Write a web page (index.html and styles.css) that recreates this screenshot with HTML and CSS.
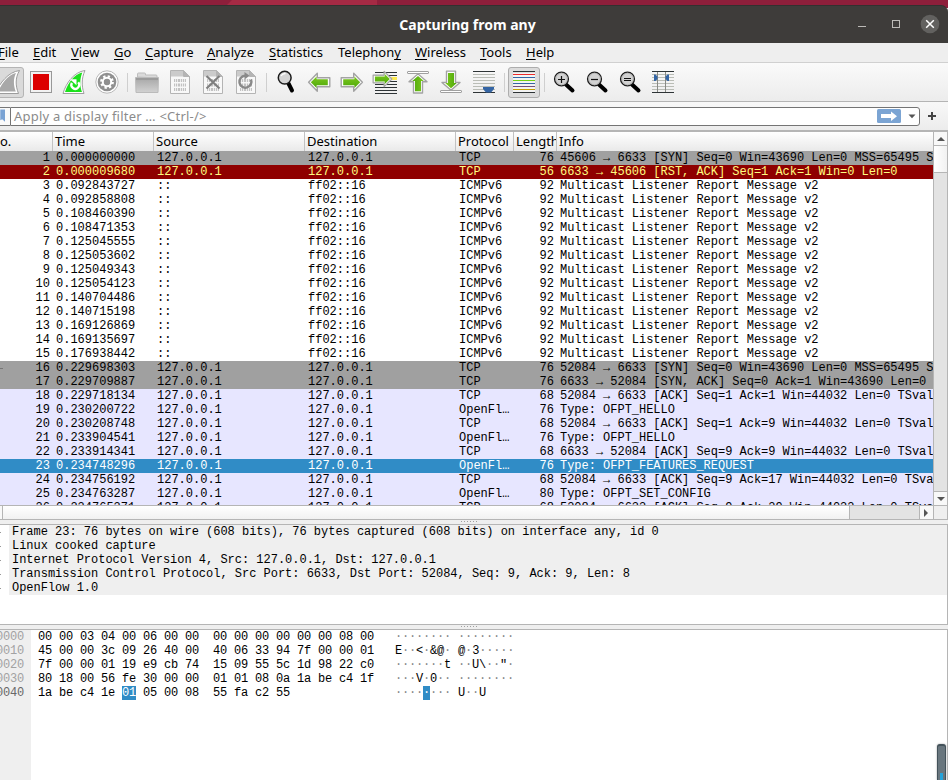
FILE: index.html
```html
<!DOCTYPE html>
<html lang="en">
<head>
<meta charset="utf-8">
<title>Capturing from any</title>
<link rel="stylesheet" href="styles.css">
</head>
<body>
<svg class="defs" width="0" height="0" aria-hidden="true">
  <defs>
    <linearGradient id="green" x1="0" y1="0" x2="0" y2="1"><stop offset="0" stop-color="#7cc81e"/><stop offset="1" stop-color="#4ea80a"/></linearGradient>
    <linearGradient id="grey" x1="0" y1="0" x2="0" y2="1"><stop offset="0" stop-color="#a6a6a6"/><stop offset="1" stop-color="#d2d2d2"/></linearGradient>
    <g id="arrow">
      <path d="M0.8 10L9.5 1v4.500H22v9H9.500V19z" fill="#fff" stroke="#a3a3a3" stroke-width="1.400" stroke-linejoin="round"/>
      <path d="M3 10L8.800 4.200V7H20v6H8.800v2.800z" fill="url(#green)"/>
    </g>
    <g id="file">
      <path d="M.5 .5h13l6 6v17H.5z" fill="#f8f8f8" stroke="#b4b4b4"/>
      <path d="M1 1h12.300v5.500H1z" fill="#cbcbcb"/>
      <path d="M13.500 .5v6h6z" fill="#b4b4b4" stroke="#b4b4b4"/>
      <path d="M4 10.500h12M4 15h12M4 19.500h12" stroke="#c2c2c2" stroke-width="3" stroke-dasharray="1.200 .8 1.200 .8 2 .8"/>
    </g>
    <g id="lens">
      <path d="M12.500 13l6.500 6" stroke="#000" stroke-width="4" stroke-linecap="round"/>
      <circle cx="8" cy="7.500" r="6.900" fill="#d2d2d2" stroke="#1c1c1c" stroke-width="1.400"/>
      <circle cx="8" cy="7.500" r="5.800" fill="none" stroke="#aaa" stroke-width=".7"/>
    </g>
  </defs>
</svg>
<div class="window">
  <div class="desktop"><i></i></div>
  <header class="titlebar">
    <h1>Capturing from any</h1>
    <svg class="controls" width="90" height="38" viewBox="858 5 90 38">
      <path d="M858 26.500h8" stroke="#bcbab7"/>
      <rect x="892.500" y="20.500" width="7" height="7" fill="none" stroke="#bcbab7"/>
      <circle cx="930" cy="24" r="9.300" fill="#62615f"/>
      <path d="M926.200 20.200l7.600 7.600m0-7.600l-7.600 7.600" stroke="#fff" stroke-width="1.500"/>
    </svg>
  </header>
  <nav class="menubar">
    <span class="m-file"><u>F</u>ile</span><span class="m-edit"><u>E</u>dit</span><span class="m-view"><u>V</u>iew</span><span class="m-go"><u>G</u>o</span><span class="m-capture"><u>C</u>apture</span><span class="m-analyze"><u>A</u>nalyze</span><span class="m-stat"><u>S</u>tatistics</span><span class="m-tel">Telephon<u>y</u></span><span class="m-wire"><u>W</u>ireless</span><span class="m-tools"><u>T</u>ools</span><span class="m-help"><u>H</u>elp</span>
  </nav>
  <div class="toolbar">
    <svg viewBox="-9 66 33 32">
      <rect x="-12" y="67.500" width="35.500" height="30" rx="2.500" fill="#dadada" stroke="#b4b4b4"/>
      <path d="M-5 93.500C0 83 8 72 19.500 70.500C15 78 15.500 86 18.500 93.500z" fill="#fff" stroke="#9c9c9c"/>
      <path d="M-2 91.500C3 82 8 75 16 73C13 79 13.500 86 15.800 91.500z" fill="#a8a8a8"/>
    </svg>
    <svg viewBox="24 66 33 32">
      <rect x="30.500" y="71.500" width="21" height="21" fill="#f2f2f2" stroke="#989898"/>
      <rect x="33" y="74" width="16" height="16" fill="#dc0000"/>
    </svg>
    <svg viewBox="57 66 33 32">
      <path d="M63 93.500C66 83 74 72 85 70.500C81.500 78 81.500 86 84 93.500z" fill="#fff" stroke="#a0a0a0"/>
      <path d="M65 92C68.500 82 74 74.500 82.300 72.500C79.700 79 79.700 86 82 92z" fill="#1be01b"/>
      <path d="M78.200 82.300a3.900 3.900 0 1 1-6.300.6" fill="none" stroke="#fff" stroke-width="2.300"/>
      <path d="M70 79.300h6.500v6z" fill="#fff"/>
    </svg>
    <svg viewBox="90 66 33 32">
      <circle cx="107" cy="82" r="11.200" fill="#fff" stroke="#b8b8b8"/>
      <circle cx="107" cy="82" r="9.300" fill="#909090"/>
      <circle cx="107" cy="82" r="5.600" fill="none" stroke="#fff" stroke-width="2.600" stroke-dasharray="2.200 2.200"/>
      <circle cx="107" cy="82" r="4.200" fill="none" stroke="#fff" stroke-width="2"/>
      <circle cx="107" cy="82" r="2.800" fill="#909090"/>
    </svg>
    <i class="sep"></i>
    <svg viewBox="130 66 33 32">
      <path d="M137.500 77v-3q0-1 1-1h6q1 0 1 1v1h10.500q1 0 1 1v2z" fill="#dadada" stroke="#bdbdbd"/>
      <path d="M135.500 77.500h23l-.5 15h-22z" fill="url(#grey)" stroke="#bbb"/>
      <path d="M136 79h22" stroke="#9b9b9b" stroke-width="2"/>
    </svg>
    <svg viewBox="163 66 33 32"><use href="#file" x="170" y="70"/></svg>
    <svg viewBox="196 66 33 32"><use href="#file" x="203" y="70"/><path d="M206.500 76l13 12.500m0-12.500l-13 12.500" stroke="#7f7f7f" stroke-width="2.200"/></svg>
    <svg viewBox="229 66 33 32"><use href="#file" x="236" y="70"/><path d="M251 79.500a6 6 0 1 1-6-3.800" fill="none" stroke="#898989" stroke-width="2.400"/><path d="M244.500 72v7.500l5-3.700z" fill="#898989"/></svg>
    <i class="sep"></i>
    <svg viewBox="269 66 33 32">
      <path d="M288.500 83.500l3.500 7" stroke="#000" stroke-width="4" stroke-linecap="round"/>
      <circle cx="284.700" cy="77.700" r="6.400" fill="#d4d4d4" stroke="#1c1c1c" stroke-width="1.500"/>
      <path d="M281 76q1.500-2.500 4.500-2.500" fill="none" stroke="#fff" stroke-width="1.300"/>
    </svg>
    <svg viewBox="302 66 33 32"><use href="#arrow" x="307.800" y="72.300"/></svg>
    <svg viewBox="335 66 33 32"><use href="#arrow" transform="translate(363.200 72.300) scale(-1 1)"/></svg>
    <svg viewBox="368 66 33 32">
      <path d="M375 72.500h22M375 75.500h22M375 81.500h22M375 84.500h22M375 87.500h22M375 90.500h22M375 93.500h22" stroke="#2e3436"/>
      <path d="M390 78.500h7" stroke="#fce94f" stroke-width="3"/>
      <use href="#arrow" transform="translate(392.500 70.500) scale(-.88 .85)"/>
    </svg>
    <svg viewBox="401 66 33 32">
      <rect x="407.500" y="71.500" width="21" height="2" rx=".5" fill="#fff" stroke="#a0a0a0"/>
      <use href="#arrow" transform="translate(428 73.200) rotate(90) scale(.9 1)"/>
    </svg>
    <svg viewBox="434 66 33 32">
      <rect x="440.500" y="90.500" width="21" height="2" rx=".5" fill="#fff" stroke="#a0a0a0"/>
      <use href="#arrow" transform="translate(441 91) rotate(-90) scale(.9 1)"/>
    </svg>
    <svg viewBox="467 66 33 32">
      <path d="M473 74.500h22M473 77.500h22M473 80.500h22M473 83.500h22M473 86.500h22M473 89.500h22" stroke="#babdb6"/>
      <path d="M473 71.500h22M473 92.500h22" stroke="#2e3436"/>
      <path d="M483 87h11v2l-3 3.500h-5l-3-3.500z" fill="#3465a4"/>
    </svg>
    <i class="sep"></i>
    <svg viewBox="507 66 33 32">
      <rect x="508.500" y="67.500" width="31" height="30" rx="2.500" fill="#dcdcdc" stroke="#adadad"/>
      <path d="M513 73h22v19h-22z" fill="#f3f3f3"/>
      <path d="M513 71.500h22M513 92.500h22" stroke="#2e3436"/>
      <path d="M513 74.500h22" stroke="#ef2929"/><path d="M513 77.500h22M513 83.500h22" stroke="#3465a4"/><path d="M513 80.500h22" stroke="#73d216"/><path d="M513 86.500h22" stroke="#75507b"/><path d="M513 89.500h22" stroke="#c4a000"/>
    </svg>
    <i class="sep"></i>
    <svg viewBox="547 66 33 32"><use href="#lens" x="553.500" y="71.500"/><path d="M558 79.500h7M561.500 76v7" stroke="#111" stroke-width="1.200"/></svg>
    <svg viewBox="580 66 33 32"><use href="#lens" x="586.500" y="71.500"/><path d="M591 79.500h7" stroke="#111" stroke-width="1.200"/></svg>
    <svg viewBox="613 66 33 32"><use href="#lens" x="619.500" y="71.500"/><path d="M624 78.500h7M624 80.500h7" stroke="#111"/></svg>
    <svg viewBox="646 66 33 32">
      <path d="M652 74.500h22M652 77.500h22M652 80.500h22M652 83.500h22M652 86.500h22M652 89.500h22" stroke="#babdb6"/>
      <path d="M652 71.500h22M652 92.500h22" stroke="#2e3436"/>
      <path d="M657.500 72v20M665.500 72v20" stroke="#888a85"/>
      <path d="M654 74.500h1.500l2 2v2.500l-2 2H654zM669 74.500h-1.500l-2 2v2.500l2 2h1.500z" fill="#3465a4"/>
    </svg>
  </div>
  <div class="filterbar">
    <svg class="bookmark" width="10" height="18" viewBox="0 0 10 18"><path d="M0 1.500h5v13L2 12l-2 1z" fill="#7aa3d4"/></svg>
    <div class="filter">
      <span>Apply a display filter … &lt;Ctrl-/&gt;</span>
      <svg width="46" height="17" viewBox="873 108 46 17">
        <rect x="877" y="109" width="24" height="14" rx="1.500" fill="#7ba4d3"/>
        <path d="M881 114h10v-2.500l6 4.700-6 4.700v-2.900h-10z" fill="#fff"/>
        <path d="M908.500 114.500h7l-3.500 3.800z" fill="#555"/>
      </svg>
    </div>
    <svg class="plus" width="8" height="8" viewBox="0 0 8 8"><path d="M0 4h8M4 0v8" stroke="#444" stroke-width="2"/></svg>
  </div>
  <section class="packets">
    <div class="list">
      <div class="row head"><span>o.</span><span>Time</span><span>Source</span><span>Destination</span><span>Protocol</span><span>Length</span><span>Info</span></div>
      <div class="row syn"><b>1</b><b>0.000000000</b><b>127.0.0.1</b><b>127.0.0.1</b><b>TCP</b><b>76</b><b>45606 → 6633 [SYN] Seq=0 Win=43690 Len=0 MSS=65495 S</b></div>
      <div class="row rst"><b>2</b><b>0.000009680</b><b>127.0.0.1</b><b>127.0.0.1</b><b>TCP</b><b>56</b><b>6633 → 45606 [RST, ACK] Seq=1 Ack=1 Win=0 Len=0</b></div>
      <div class="row"><b>3</b><b>0.092843727</b><b>::</b><b>ff02::16</b><b>ICMPv6</b><b>92</b><b>Multicast Listener Report Message v2</b></div>
      <div class="row"><b>4</b><b>0.092858808</b><b>::</b><b>ff02::16</b><b>ICMPv6</b><b>92</b><b>Multicast Listener Report Message v2</b></div>
      <div class="row"><b>5</b><b>0.108460390</b><b>::</b><b>ff02::16</b><b>ICMPv6</b><b>92</b><b>Multicast Listener Report Message v2</b></div>
      <div class="row"><b>6</b><b>0.108471353</b><b>::</b><b>ff02::16</b><b>ICMPv6</b><b>92</b><b>Multicast Listener Report Message v2</b></div>
      <div class="row"><b>7</b><b>0.125045555</b><b>::</b><b>ff02::16</b><b>ICMPv6</b><b>92</b><b>Multicast Listener Report Message v2</b></div>
      <div class="row"><b>8</b><b>0.125053602</b><b>::</b><b>ff02::16</b><b>ICMPv6</b><b>92</b><b>Multicast Listener Report Message v2</b></div>
      <div class="row"><b>9</b><b>0.125049343</b><b>::</b><b>ff02::16</b><b>ICMPv6</b><b>92</b><b>Multicast Listener Report Message v2</b></div>
      <div class="row"><b>10</b><b>0.125054123</b><b>::</b><b>ff02::16</b><b>ICMPv6</b><b>92</b><b>Multicast Listener Report Message v2</b></div>
      <div class="row"><b>11</b><b>0.140704486</b><b>::</b><b>ff02::16</b><b>ICMPv6</b><b>92</b><b>Multicast Listener Report Message v2</b></div>
      <div class="row"><b>12</b><b>0.140715198</b><b>::</b><b>ff02::16</b><b>ICMPv6</b><b>92</b><b>Multicast Listener Report Message v2</b></div>
      <div class="row"><b>13</b><b>0.169126869</b><b>::</b><b>ff02::16</b><b>ICMPv6</b><b>92</b><b>Multicast Listener Report Message v2</b></div>
      <div class="row"><b>14</b><b>0.169135697</b><b>::</b><b>ff02::16</b><b>ICMPv6</b><b>92</b><b>Multicast Listener Report Message v2</b></div>
      <div class="row"><b>15</b><b>0.176938442</b><b>::</b><b>ff02::16</b><b>ICMPv6</b><b>92</b><b>Multicast Listener Report Message v2</b></div>
      <div class="row syn first"><b>16</b><b>0.229698303</b><b>127.0.0.1</b><b>127.0.0.1</b><b>TCP</b><b>76</b><b>52084 → 6633 [SYN] Seq=0 Win=43690 Len=0 MSS=65495 S</b></div>
      <div class="row syn"><b>17</b><b>0.229709887</b><b>127.0.0.1</b><b>127.0.0.1</b><b>TCP</b><b>76</b><b>6633 → 52084 [SYN, ACK] Seq=0 Ack=1 Win=43690 Len=0 </b></div>
      <div class="row tcp"><b>18</b><b>0.229718134</b><b>127.0.0.1</b><b>127.0.0.1</b><b>TCP</b><b>68</b><b>52084 → 6633 [ACK] Seq=1 Ack=1 Win=44032 Len=0 TSval</b></div>
      <div class="row tcp"><b>19</b><b>0.230200722</b><b>127.0.0.1</b><b>127.0.0.1</b><b>OpenFl…</b><b>76</b><b>Type: OFPT_HELLO</b></div>
      <div class="row tcp"><b>20</b><b>0.230208748</b><b>127.0.0.1</b><b>127.0.0.1</b><b>TCP</b><b>68</b><b>52084 → 6633 [ACK] Seq=1 Ack=9 Win=44032 Len=0 TSval</b></div>
      <div class="row tcp"><b>21</b><b>0.233904541</b><b>127.0.0.1</b><b>127.0.0.1</b><b>OpenFl…</b><b>76</b><b>Type: OFPT_HELLO</b></div>
      <div class="row tcp"><b>22</b><b>0.233914341</b><b>127.0.0.1</b><b>127.0.0.1</b><b>TCP</b><b>68</b><b>6633 → 52084 [ACK] Seq=9 Ack=9 Win=44032 Len=0 TSval</b></div>
      <div class="row sel"><b>23</b><b>0.234748296</b><b>127.0.0.1</b><b>127.0.0.1</b><b>OpenFl…</b><b>76</b><b>Type: OFPT_FEATURES_REQUEST</b></div>
      <div class="row tcp"><b>24</b><b>0.234756192</b><b>127.0.0.1</b><b>127.0.0.1</b><b>TCP</b><b>68</b><b>52084 → 6633 [ACK] Seq=9 Ack=17 Win=44032 Len=0 TSva</b></div>
      <div class="row tcp"><b>25</b><b>0.234763287</b><b>127.0.0.1</b><b>127.0.0.1</b><b>OpenFl…</b><b>80</b><b>Type: OFPT_SET_CONFIG</b></div>
      <div class="row tcp"><b>26</b><b>0.234765371</b><b>127.0.0.1</b><b>127.0.0.1</b><b>TCP</b><b>68</b><b>52084 → 6633 [ACK] Seq=9 Ack=29 Win=44032 Len=0 TSva</b></div>
    </div>
    <div class="vscroll">
      <div class="btn"><svg width="8" height="4"><path d="M0 4l4-4 4 4z"/></svg></div>
      <div class="vthumb"></div>
      <div class="groove"></div>
      <div class="btn down"><svg width="8" height="4"><path d="M0 0h8l-4 4z"/></svg></div>
    </div>
    <div class="hscroll">
      <div class="hstart"></div>
      <div class="hthumb"></div>
      <div class="hgroove"></div>
      <div class="hbtn"><svg width="4" height="8"><path d="M0 0v8l4-4z"/></svg></div>
      <div class="corner"></div>
    </div>
  </section>
  <div class="splitter"><i></i></div>
  <section class="details">
    <div>Frame 23: 76 bytes on wire (608 bits), 76 bytes captured (608 bits) on interface any, id 0</div>
    <div>Linux cooked capture</div>
    <div>Internet Protocol Version 4, Src: 127.0.0.1, Dst: 127.0.0.1</div>
    <div>Transmission Control Protocol, Src Port: 6633, Dst Port: 52084, Seq: 9, Ack: 9, Len: 8</div>
    <div>OpenFlow 1.0</div>
  </section>
  <div class="splitter"><i></i></div>
  <section class="bytes">
<pre class="offsets">0000
0010
0020
0030
<em>0040</em></pre>
<pre class="hex">00 00 03 04 00 06 00 00  00 00 00 00 00 00 08 00
45 00 00 3c 09 26 40 00  40 06 33 94 7f 00 00 01
7f 00 00 01 19 e9 cb 74  15 09 55 5c 1d 98 22 c0
80 18 00 56 fe 30 00 00  01 01 08 0a 1a be c4 1f
1a be c4 1e <mark>01</mark> 05 00 08  55 fa c2 55</pre>
<pre class="ascii">········ ········
<s>E</s>··<s>&lt;</s>·<s>&amp;@</s>· <s>@</s>·<s>3</s>·····
·······<s>t</s> ··<s>U\</s>··<s>"</s>·
···<s>V</s>·<s>0</s>·· ········
····<mark>·</mark>··· <s>U</s>··<s>U</s></pre>
    <div class="meter"><i></i></div>
  </section>
</div>
</body>
</html>
```
FILE: styles.css
```css
* { box-sizing: border-box; }
body { margin: 0; background: #efefef; color: #000; font: 13px/18px "Noto Sans", "Open Sans", sans-serif; }
.defs { position: absolute; }
.window { width: 948px; height: 780px; overflow: hidden; display: flex; flex-direction: column; }
.desktop { height: 8px; margin-bottom: -3px; flex: none; background: #8e1f3b; padding-left: 227px; }
.desktop i { display: block; width: 150px; height: 5px; background: #a52a44; clip-path: polygon(5px 0, 100% 0, 100% 100%, 0 100%); }
.titlebar { height: 38px; flex: none; display: flex; justify-content: flex-end; background: #3e3c3a; border-top: 1px solid #333130; border-radius: 0 7px 0 0; z-index: 1; }
.titlebar h1 { flex: 1; margin: 1px 0 0 77px; color: #fff; font-size: 14px; line-height: 36px; font-weight: 700; text-align: center; }
.controls { margin-top: -1px; }
.menubar { height: 20px; flex: none; display: flex; border-bottom: 1px solid #d0d0d0; background: #eee; line-height: 19px; white-space: nowrap; }
.menubar span { flex: none; }
.menubar u { text-underline-offset: 2px; text-decoration-thickness: 1px; text-decoration-skip-ink: none; }
.m-file { width: 35px; margin-left: -2px; }
.m-edit { width: 38px; }
.m-view { width: 43px; }
.m-go { width: 31px; }
.m-capture { width: 62px; }
.m-analyze { width: 62px; }
.m-stat { width: 69px; }
.m-tel { width: 77px; }
.m-wire { width: 65px; }
.m-tools { width: 46px; }
.toolbar { height: 39px; flex: none; padding: 3px 0 0; margin-left: -9px; display: flex; border-bottom: 1px solid #b4b4b4; background: linear-gradient(#fafafa, #ececec); }
.toolbar svg { width: 33px; height: 32px; flex: none; }
.sep { width: 7px; height: 19px; flex: none; margin-top: 7px; background: linear-gradient(90deg, transparent 4px, #cfcfcf 4px, #cfcfcf 5px, transparent 5px); }
.filterbar { height: 28px; flex: none; display: flex; align-items: flex-start; padding-top: 5px; background: linear-gradient(#f8f8f8, #ececec); }
.bookmark { border-top: 1px solid #777; border-bottom: 1px solid #777; height: 19px; background: #fafafa; }
.filter { width: 910px; height: 19px; display: flex; justify-content: space-between; border: 1px solid #747474; border-radius: 0 3px 3px 0; background: #fff; color: #8b8b8b; line-height: 17px; letter-spacing: 0.21px; padding-left: 3px; }
.plus { margin: 5px 0 0 8px; }
.packets { height: 390px; flex: none; display: grid; grid-template: 374px 14px / 933px 14px; border-top: 2px solid #b5b5b5; border-right: 1px solid #b5b5b5; }
.list { overflow: hidden; background: #fff; border-bottom: 1px solid #b5b5b5; }
.row { display: grid; grid-template-columns: 53px 101px 151px 151px 58px 43px 376px; height: 14px; font: 12px/14px "Liberation Mono", monospace; white-space: pre; }
.row b { font-weight: 400; padding-left: 3px; overflow: hidden; }
.row b:last-child { letter-spacing: -0.02px; }
.row b:nth-child(1), .row b:nth-child(6) { text-align: right; padding-right: 3px; }
.head { height: 19px; font: 13px/18px "Noto Sans", sans-serif; background: linear-gradient(#fff, #e9e9e9); }
.head span { padding-left: 2px; border-right: 1px solid #c2c2c2; overflow: hidden; }
.head span:first-child { padding-left: 0; }
.head span:last-child { border: 0; }
.syn { background: #a0a0a0; }
.rst { background: #8f0000; color: #fffc80; }
.tcp { background: #e7e6ff; }
.sel { background: #308cc6; color: #fff; }
.first { background: linear-gradient(#777, #777) 0 7px / 3px 1px no-repeat #a0a0a0; }
.vscroll { display: flex; flex-direction: column; border-left: 1px solid #b5b5b5; border-bottom: 1px solid #b5b5b5; }
.btn { height: 14px; flex: none; display: flex; align-items: center; justify-content: center; background: #f8f8f8; border-bottom: 1px solid #b5b5b5; fill: #555; }
.down { border-top: 1px solid #b5b5b5; border-bottom: 0; }
.vthumb { height: 27px; background: linear-gradient(90deg, #fff, #f1f1f1); border-bottom: 1px solid #b5b5b5; }
.groove { flex: 1; background: #e3e3e3; }
.hscroll { grid-column: 1 / 3; display: flex; height: 14px; border-bottom: 1px solid #b5b5b5; }
.hstart { width: 3px; border-right: 1px solid #b5b5b5; background: #f8f8f8; }
.hthumb { width: 847px; border-right: 1px solid #b5b5b5; background: linear-gradient(#fff, #f1f1f1); }
.hgroove { width: 70px; border-right: 1px solid #b5b5b5; background: #e3e3e3; }
.hbtn { width: 14px; display: flex; align-items: center; justify-content: center; border-right: 1px solid #b5b5b5; background: #f8f8f8; fill: #555; padding-right: 2px; }
.corner { flex: 1; }
.splitter { height: 4px; flex: none; display: flex; justify-content: center; padding: 1px 0 0; }
.splitter i { width: 17px; height: 1px; margin-right: 10px; background: repeating-linear-gradient(90deg, #a0a0a0 0 1px, transparent 1px 3px); }
.details { height: 101px; flex: none; border: solid #b5b5b5; border-width: 1px 1px 1px 0; background: #fff; font: 12px/14px "Liberation Mono", monospace; letter-spacing: -0.015px; }
.details div { height: 14px; padding-left: 12px; background: linear-gradient(#999, #999) 0 7px / 1px 1px no-repeat, linear-gradient(90deg, #fff 9px, #efefef 9px); white-space: pre; }
.bytes { flex: 1; display: flex; position: relative; border-top: 1px solid #b5b5b5; border-right: 1px solid #b5b5b5; background: #fff; font: 12px/14px "Liberation Mono", monospace; letter-spacing: -0.2px; }
.bytes pre { margin: 0; font: inherit; }
.offsets { width: 31px; background: #efefef; color: #a2a2a2; direction: rtl; padding-right: 7px; overflow: hidden; }
.offsets em { font-style: normal; color: #686868; }
.hex { width: 364px; padding-left: 7px; }
.ascii { color: #888; }
.ascii s { color: #000; text-decoration: none; }
mark { display: inline-block; height: 14px; vertical-align: top; background: #308cc6; color: #fff; }
.meter { position: absolute; right: 1px; bottom: 0; width: 9px; height: 36px; border: solid #43525a; border-width: 2px 1px 0; border-radius: 3px 3px 0 0; background: #69767e; box-shadow: 0 0 2px #999; display: flex; justify-content: center; align-items: flex-end; }
.meter i { width: 3px; height: 7px; background: #25a3da; }
```
